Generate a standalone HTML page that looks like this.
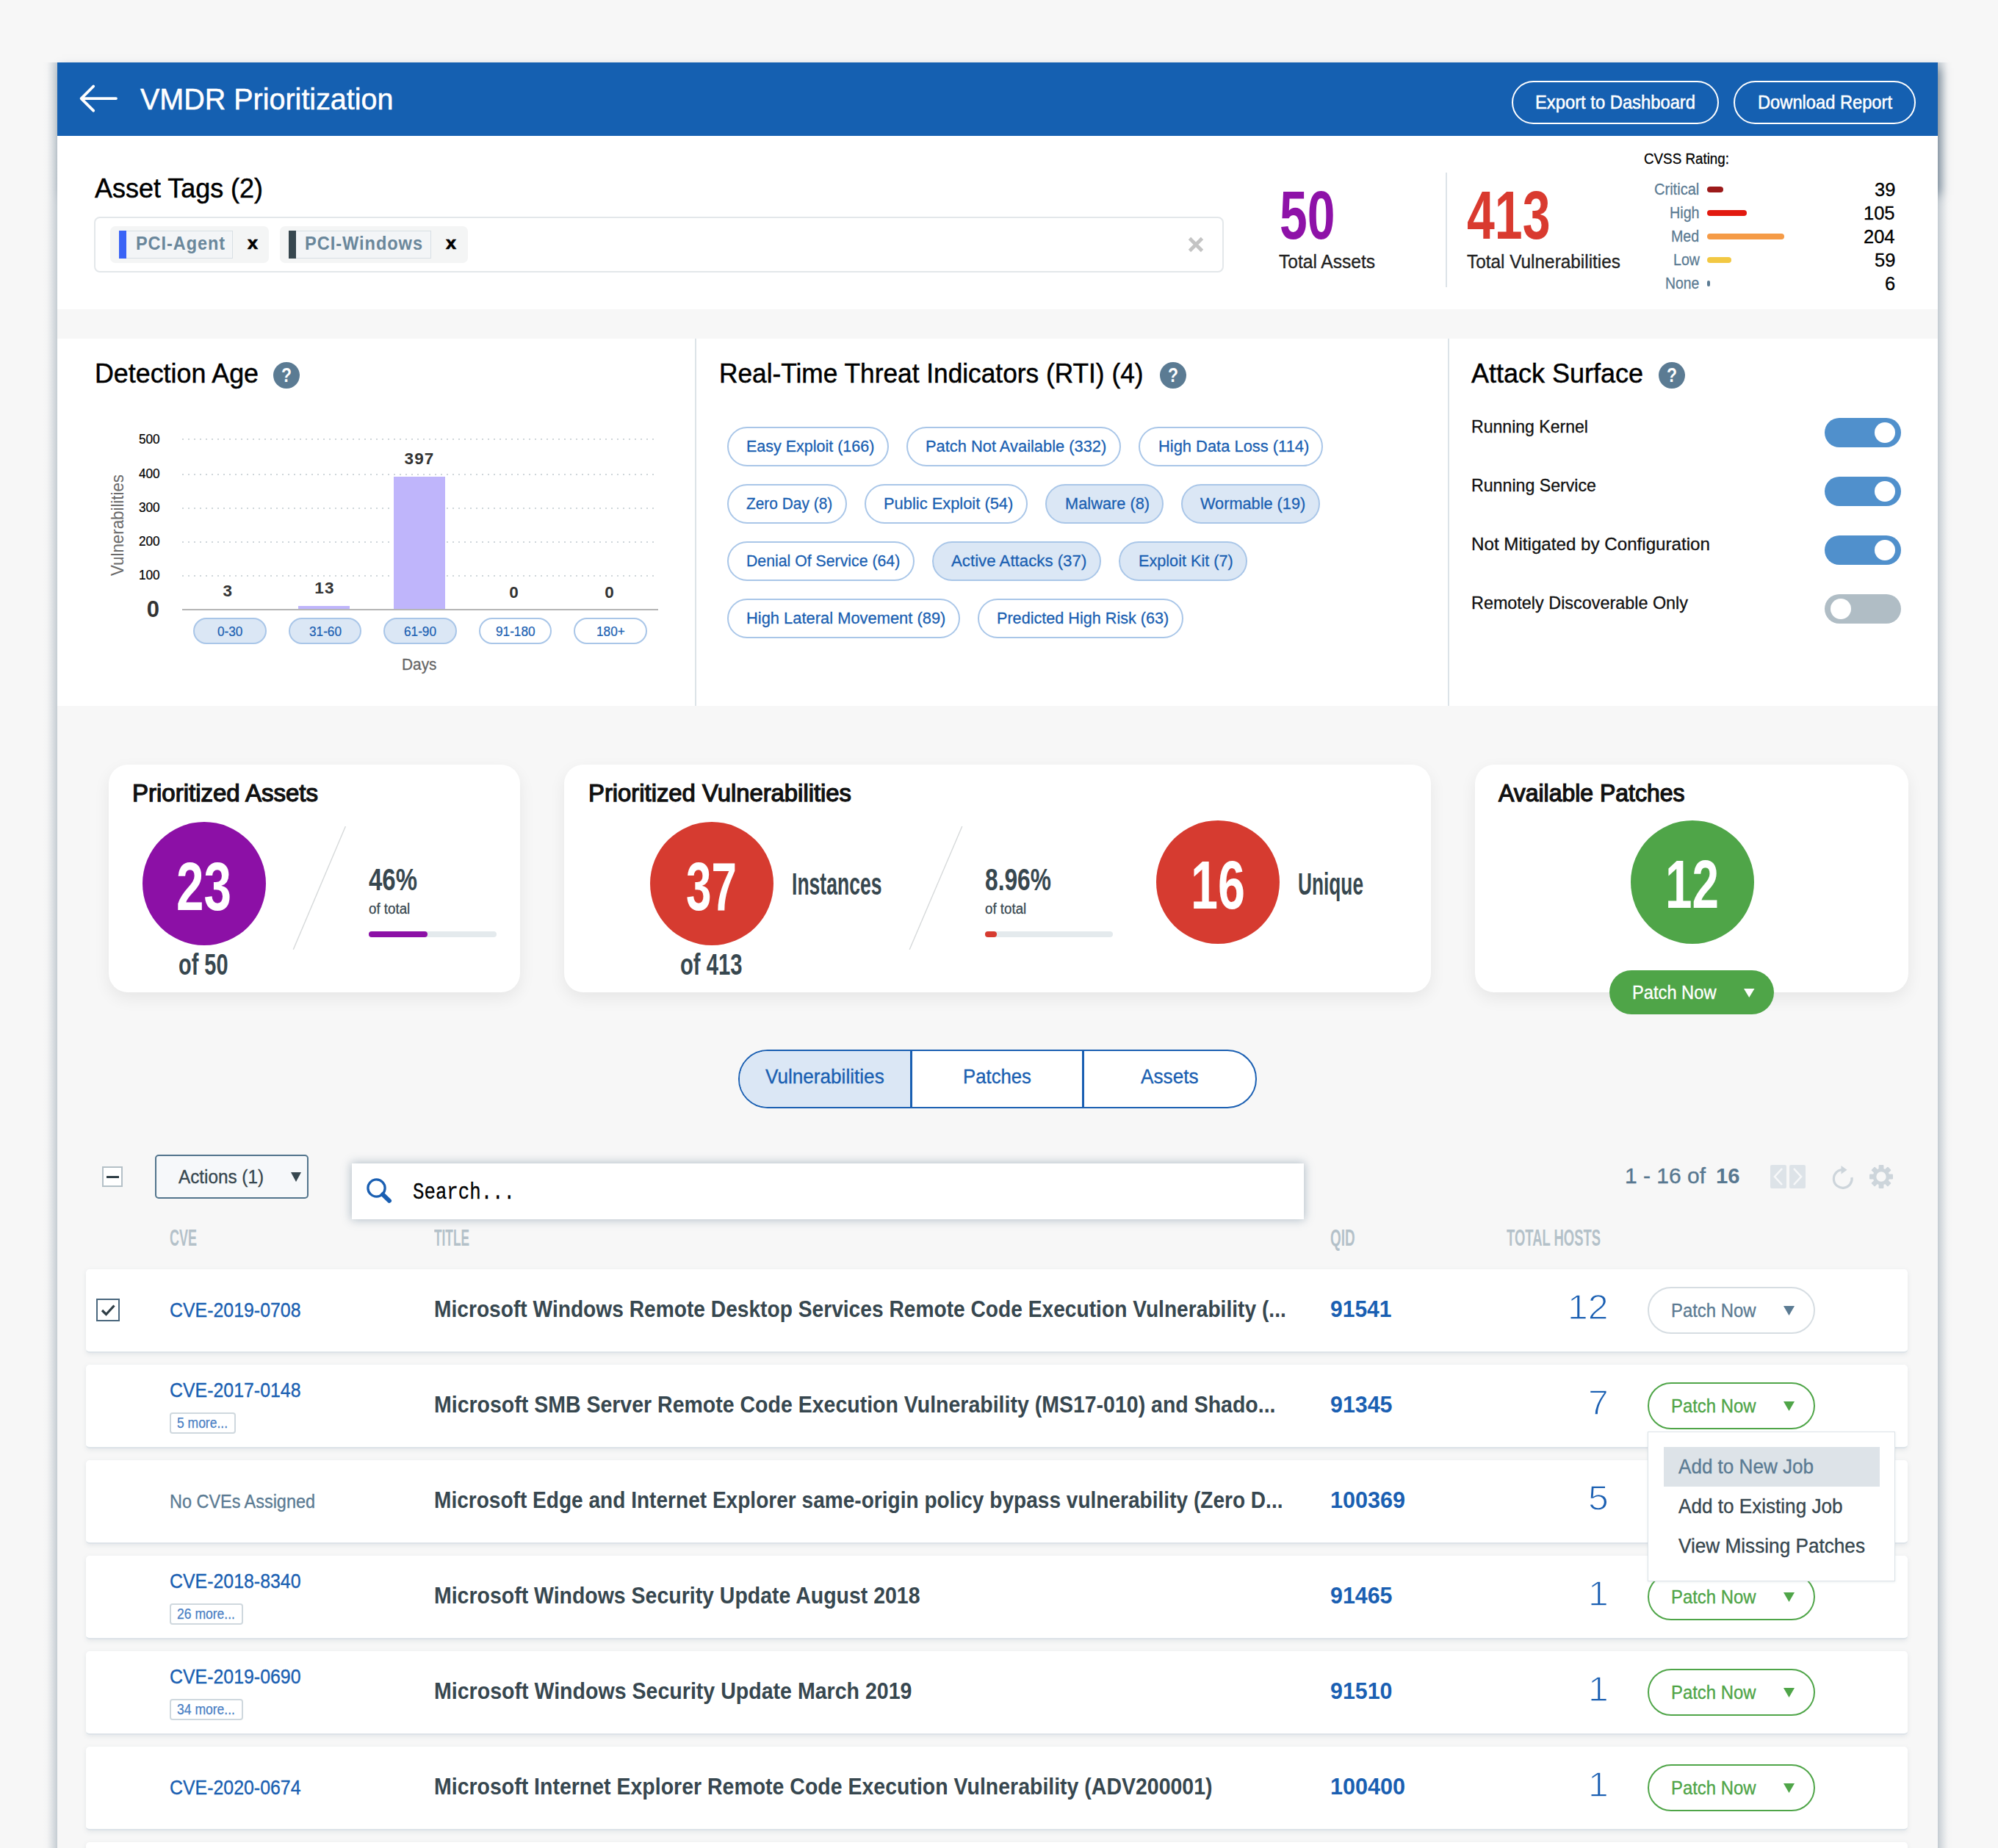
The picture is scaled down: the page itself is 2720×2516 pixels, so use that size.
<!DOCTYPE html>
<html lang="en"><head><meta charset="utf-8"><title>VMDR Prioritization</title>
<style>
*{box-sizing:border-box;margin:0;padding:0}
html,body{background:#f7f7f7}
body{font-family:"Liberation Sans", sans-serif}
#root{position:relative;width:2720px;height:2516px;overflow:hidden;background:#f7f7f7}
@media (min-resolution:2dppx) and (max-width:1400px){html{zoom:.5}}
.b{position:absolute}
.t{position:absolute;white-space:pre;line-height:1;transform-origin:0 50%;display:block;font-family:"Liberation Sans", sans-serif;font-weight:400}
.m{font-family:"Liberation Mono", monospace}
svg{position:absolute;overflow:visible}
</style></head>
<body>
<div id="root">
<div class="b" style="left:58px;top:85px;width:20px;height:2440px;background:linear-gradient(to right,rgba(140,156,169,0) 0%,rgba(140,156,169,.03) 30%,rgba(140,156,169,.11) 45%,rgba(140,156,169,.23) 65%,rgba(140,156,169,.33) 80%,rgba(140,156,169,.47) 100%)"></div>
<div class="b" style="left:2638px;top:85px;width:20px;height:2440px;background:linear-gradient(to left,rgba(140,156,169,0) 0%,rgba(140,156,169,.03) 30%,rgba(140,156,169,.11) 45%,rgba(140,156,169,.23) 65%,rgba(140,156,169,.33) 80%,rgba(140,156,169,.47) 100%)"></div>
<div class="b" style="left:80px;top:90px;width:2556px;height:172px;box-shadow:5px 3px 13px rgba(60,85,108,.6);"></div>
<div class="b" style="left:78px;top:85px;width:2560px;height:2440px;background:#f7f7f7;"></div>
<div class="b" style="left:78px;top:85px;width:2560px;height:100px;background:#1560b1;"></div>
<svg style="left:100px;top:105px" width="70" height="60" viewBox="100 105 70 60"><path d="M158 134.1H110.6M127.2 117.5L110.6 134.1L127.2 150.7" fill="none" stroke="#fff" stroke-width="3.8" stroke-linecap="round" stroke-linejoin="round"/></svg>
<span class="t" style="font-size:40px;color:#fff;-webkit-text-stroke:0.52px;left:190.50px;top:115.43px;transform:scaleX(0.9872);">VMDR Prioritization</span>
<div class="b" style="left:2058px;top:110px;width:281.5px;height:58.5px;border-radius:30px;border:2.5px solid #fff;"></div>
<span class="t" style="font-size:25px;color:#fff;left:2090.00px;top:127.13px;transform:scaleX(0.9507);-webkit-text-stroke:.5px #fff;">Export to Dashboard</span>
<div class="b" style="left:2360px;top:110px;width:248px;height:58.5px;border-radius:30px;border:2.5px solid #fff;"></div>
<span class="t" style="font-size:25px;color:#fff;left:2392.50px;top:127.13px;transform:scaleX(0.9473);-webkit-text-stroke:.5px #fff;">Download Report</span>
<div class="b" style="left:78px;top:185px;width:2560px;height:235.5px;background:#fff;"></div>
<span class="t" style="font-size:36.6px;color:#000;-webkit-text-stroke:0.48px;left:128.50px;top:238.61px;transform:scaleX(0.9823);">Asset Tags (2)</span>
<div class="b" style="left:128px;top:295px;width:1537.5px;height:76px;background:#fff;border-radius:8px;border:2px solid #e3e7ea;"></div>
<div class="b" style="left:150px;top:308px;width:216px;height:49.5px;background:#f4f5f5;border-radius:7px;"></div>
<div class="b" style="left:162px;top:314px;width:10px;height:37.5px;background:#3a63f6;"></div>
<div class="b" style="left:172px;top:314px;width:144.5px;height:37.5px;background:#f3f5f7;border:1.5px solid #d8dfe4;border-left:none;"></div>
<span class="t" style="font-size:25px;color:#6a879b;font-weight:700;letter-spacing:1px;left:185.00px;top:318.83px;transform:scaleX(0.9397);">PCI-Agent</span>
<span class="t" style="font-size:24.5px;color:#000;font-weight:700;left:336.60px;top:318.86px;transform:scaleX(1.0263);-webkit-text-stroke:.7px #000;">x</span>
<div class="b" style="left:381px;top:308px;width:256px;height:49.5px;background:#f4f5f5;border-radius:7px;"></div>
<div class="b" style="left:392.5px;top:314px;width:10px;height:37.5px;background:#37474f;"></div>
<div class="b" style="left:402.5px;top:314px;width:184px;height:37.5px;background:#f3f5f7;border:1.5px solid #d8dfe4;border-left:none;"></div>
<span class="t" style="font-size:25px;color:#6a879b;font-weight:700;letter-spacing:1px;left:415.00px;top:318.83px;transform:scaleX(0.9443);">PCI-Windows</span>
<span class="t" style="font-size:24.5px;color:#000;font-weight:700;left:606.60px;top:318.86px;transform:scaleX(1.0263);-webkit-text-stroke:.7px #000;">x</span>
<svg style="left:1618px;top:323px" width="20" height="20" viewBox="0 0 20 20"><path d="M1.5 1.5L18.5 18.5M18.5 1.5L1.5 18.5" stroke="#c4c4c4" stroke-width="4.8" fill="none"/></svg>
<span class="t" style="font-size:92px;color:#8e12a8;font-weight:700;left:1741.50px;top:246.70px;transform:scaleX(0.7377);">50</span>
<span class="t" style="font-size:26.5px;color:#222;-webkit-text-stroke:0.34px;left:1741.00px;top:342.96px;transform:scaleX(0.9264);">Total Assets</span>
<div class="b" style="left:1968px;top:235px;width:2px;height:156px;background:#dde3e8;"></div>
<span class="t" style="font-size:92px;color:#d93a2f;font-weight:700;left:1997.00px;top:246.70px;transform:scaleX(0.7394);">413</span>
<span class="t" style="font-size:26.5px;color:#222;-webkit-text-stroke:0.34px;left:1996.50px;top:342.96px;transform:scaleX(0.9193);">Total Vulnerabilities</span>
<span class="t" style="font-size:21px;color:#000;-webkit-text-stroke:0.27px;left:2238.00px;top:205.22px;transform:scaleX(0.8953);">CVSS Rating:</span>
<span class="t" style="font-size:22.5px;color:#5b7b93;-webkit-text-stroke:0.29px;left:2252.20px;top:247.05px;transform:scaleX(0.8914);">Critical</span>
<div class="b" style="left:2324px;top:253.5px;width:22px;height:8.5px;background:#9c1a1a;border-radius:4.5px;"></div>
<span class="t" style="font-size:26px;color:#000;-webkit-text-stroke:0.34px;left:2551.66px;top:245.29px;transform:scaleX(0.9800);">39</span>
<span class="t" style="font-size:22.5px;color:#5b7b93;-webkit-text-stroke:0.29px;left:2272.90px;top:279.05px;transform:scaleX(0.8772);">High</span>
<div class="b" style="left:2324px;top:285.5px;width:54px;height:8.5px;background:#e2190f;border-radius:4.5px;"></div>
<span class="t" style="font-size:26px;color:#000;-webkit-text-stroke:0.34px;left:2537.48px;top:277.29px;transform:scaleX(0.9800);">105</span>
<span class="t" style="font-size:22.5px;color:#5b7b93;-webkit-text-stroke:0.29px;left:2275.30px;top:311.05px;transform:scaleX(0.8725);">Med</span>
<div class="b" style="left:2324px;top:317.5px;width:105px;height:8.5px;background:#f59b47;border-radius:4.5px;"></div>
<span class="t" style="font-size:26px;color:#000;-webkit-text-stroke:0.34px;left:2537.48px;top:309.29px;transform:scaleX(0.9800);">204</span>
<span class="t" style="font-size:22.5px;color:#5b7b93;-webkit-text-stroke:0.29px;left:2277.50px;top:343.05px;transform:scaleX(0.8721);">Low</span>
<div class="b" style="left:2324px;top:349.5px;width:33px;height:8.5px;background:#f2c843;border-radius:4.5px;"></div>
<span class="t" style="font-size:26px;color:#000;-webkit-text-stroke:0.34px;left:2551.66px;top:341.29px;transform:scaleX(0.9800);">59</span>
<span class="t" style="font-size:22.5px;color:#5b7b93;-webkit-text-stroke:0.29px;left:2267.20px;top:375.05px;transform:scaleX(0.8606);">None</span>
<div class="b" style="left:2324px;top:381.5px;width:4px;height:8.5px;background:#5b7b93;border-radius:4.5px;"></div>
<span class="t" style="font-size:26px;color:#000;-webkit-text-stroke:0.34px;left:2565.82px;top:373.29px;transform:scaleX(0.9800);">6</span>
<div class="b" style="left:78px;top:460.5px;width:2560px;height:500px;background:#fff;"></div>
<div class="b" style="left:945.5px;top:460.5px;width:2px;height:500px;background:#dce3e8;"></div>
<div class="b" style="left:1971.2px;top:460.5px;width:2px;height:500px;background:#dce3e8;"></div>
<span class="t" style="font-size:36.6px;color:#000;-webkit-text-stroke:0.48px;left:128.50px;top:490.61px;transform:scaleX(0.9791);">Detection Age</span>
<div class="b" style="left:372.1px;top:493.3px;width:35.8px;height:35.8px;border-radius:50%;background:#5b7b93"></div>
<span class="t" style="font-size:28px;color:#fff;font-weight:700;left:383.29px;top:497.49px;transform:scaleX(0.8200);">?</span>
<span class="t" style="font-size:24.5px;color:#6a6a6a;left:147.96px;top:783.70px;transform-origin:0 0;transform:rotate(-90deg) scaleX(0.9101);">Vulnerabilities</span>
<span class="t" style="font-size:18px;color:#000;-webkit-text-stroke:0.23px;left:188.70px;top:589.46px;transform:scaleX(0.9552);">500</span>
<div class="b" style="left:248px;top:597px;width:643px;height:2px;background:repeating-linear-gradient(to right,#cfd6da 0 2px,transparent 2px 8px)"></div>
<span class="t" style="font-size:18px;color:#000;-webkit-text-stroke:0.23px;left:188.70px;top:635.56px;transform:scaleX(0.9552);">400</span>
<div class="b" style="left:248px;top:644.6px;width:643px;height:2px;background:repeating-linear-gradient(to right,#cfd6da 0 2px,transparent 2px 8px)"></div>
<span class="t" style="font-size:18px;color:#000;-webkit-text-stroke:0.23px;left:188.70px;top:681.66px;transform:scaleX(0.9552);">300</span>
<div class="b" style="left:248px;top:690.7px;width:643px;height:2px;background:repeating-linear-gradient(to right,#cfd6da 0 2px,transparent 2px 8px)"></div>
<span class="t" style="font-size:18px;color:#000;-webkit-text-stroke:0.23px;left:188.70px;top:727.76px;transform:scaleX(0.9552);">200</span>
<div class="b" style="left:248px;top:736.8px;width:643px;height:2px;background:repeating-linear-gradient(to right,#cfd6da 0 2px,transparent 2px 8px)"></div>
<span class="t" style="font-size:18px;color:#000;-webkit-text-stroke:0.23px;left:188.70px;top:773.86px;transform:scaleX(0.9552);">100</span>
<div class="b" style="left:248px;top:782.9px;width:643px;height:2px;background:repeating-linear-gradient(to right,#cfd6da 0 2px,transparent 2px 8px)"></div>
<span class="t" style="font-size:31px;color:#333;font-weight:700;left:199.75px;top:814.25px;">0</span>
<div class="b" style="left:248px;top:828.5px;width:648px;height:2px;background:#b5b5b5;"></div>
<div class="b" style="left:536px;top:649.2px;width:70px;height:179.5px;background:#bfb5fb;"></div>
<div class="b" style="left:406.2px;top:825px;width:69.8px;height:3.7px;background:#bfb5fb;"></div>
<span class="t" style="font-size:22.5px;color:#333;font-weight:700;letter-spacing:1.2px;left:303.44px;top:793.95px;">3</span>
<span class="t" style="font-size:22.5px;color:#333;font-weight:700;letter-spacing:1.2px;left:428.28px;top:789.95px;">13</span>
<span class="t" style="font-size:22.5px;color:#333;font-weight:700;letter-spacing:1.2px;left:550.43px;top:613.95px;">397</span>
<span class="t" style="font-size:22.5px;color:#333;font-weight:700;letter-spacing:1.2px;left:693.14px;top:795.95px;">0</span>
<span class="t" style="font-size:22.5px;color:#333;font-weight:700;letter-spacing:1.2px;left:823.14px;top:795.95px;">0</span>
<div class="b" style="left:263.2px;top:841px;width:99.8px;height:35.6px;background:#dbe7f5;border-radius:18px;border:2px solid #a9c6e8;"></div>
<span class="t" style="font-size:18.5px;color:#1a5fb2;-webkit-text-stroke:0.24px;left:295.88px;top:851.14px;transform:scaleX(0.9300);">0-30</span>
<div class="b" style="left:392.65px;top:841px;width:99.8px;height:35.6px;background:#dbe7f5;border-radius:18px;border:2px solid #a9c6e8;"></div>
<span class="t" style="font-size:18.5px;color:#1a5fb2;-webkit-text-stroke:0.24px;left:420.54px;top:851.14px;transform:scaleX(0.9300);">31-60</span>
<div class="b" style="left:522.1px;top:841px;width:99.8px;height:35.6px;background:#dbe7f5;border-radius:18px;border:2px solid #a9c6e8;"></div>
<span class="t" style="font-size:18.5px;color:#1a5fb2;-webkit-text-stroke:0.24px;left:549.99px;top:851.14px;transform:scaleX(0.9300);">61-90</span>
<div class="b" style="left:651.55px;top:841px;width:99.8px;height:35.6px;background:#fff;border-radius:18px;border:2px solid #a9c6e8;"></div>
<span class="t" style="font-size:18.5px;color:#1a5fb2;-webkit-text-stroke:0.24px;left:674.66px;top:851.14px;transform:scaleX(0.9300);">91-180</span>
<div class="b" style="left:781px;top:841px;width:99.8px;height:35.6px;background:#fff;border-radius:18px;border:2px solid #a9c6e8;"></div>
<span class="t" style="font-size:18.5px;color:#1a5fb2;-webkit-text-stroke:0.24px;left:811.52px;top:851.14px;transform:scaleX(0.9300);">180+</span>
<span class="t" style="font-size:21.8px;color:#666;-webkit-text-stroke:0.28px;left:547.25px;top:894.14px;transform:scaleX(0.9563);">Days</span>
<span class="t" style="font-size:36.6px;color:#000;-webkit-text-stroke:0.48px;left:979.00px;top:490.61px;transform:scaleX(0.9642);">Real-Time Threat Indicators (RTI) (4)</span>
<div class="b" style="left:1578.8px;top:493.3px;width:35.8px;height:35.8px;border-radius:50%;background:#5b7b93"></div>
<span class="t" style="font-size:28px;color:#fff;font-weight:700;left:1589.99px;top:497.49px;transform:scaleX(0.8200);">?</span>
<div class="b" style="left:989.5px;top:581.3px;width:220.3px;height:53.4px;background:#fff;border-radius:27px;border:2.5px solid #a9c6e8;"></div>
<span class="t" style="font-size:22.5px;color:#1a5fb2;-webkit-text-stroke:0.29px;left:1016.00px;top:596.95px;transform:scaleX(0.9546);">Easy Exploit (166)</span>
<div class="b" style="left:1233.8px;top:581.3px;width:292.3px;height:53.4px;background:#fff;border-radius:27px;border:2.5px solid #a9c6e8;"></div>
<span class="t" style="font-size:22.5px;color:#1a5fb2;-webkit-text-stroke:0.29px;left:1260.30px;top:596.95px;transform:scaleX(0.9716);">Patch Not Available (332)</span>
<div class="b" style="left:1550.1px;top:581.3px;width:251.3px;height:53.4px;background:#fff;border-radius:27px;border:2.5px solid #a9c6e8;"></div>
<span class="t" style="font-size:22.5px;color:#1a5fb2;-webkit-text-stroke:0.29px;left:1576.60px;top:596.95px;transform:scaleX(0.9733);">High Data Loss (114)</span>
<div class="b" style="left:989.5px;top:659.3px;width:163.2px;height:53.4px;background:#fff;border-radius:27px;border:2.5px solid #a9c6e8;"></div>
<span class="t" style="font-size:22.5px;color:#1a5fb2;-webkit-text-stroke:0.29px;left:1016.00px;top:674.95px;transform:scaleX(0.9281);">Zero Day (8)</span>
<div class="b" style="left:1176.7px;top:659.3px;width:222.3px;height:53.4px;background:#fff;border-radius:27px;border:2.5px solid #a9c6e8;"></div>
<span class="t" style="font-size:22.5px;color:#1a5fb2;-webkit-text-stroke:0.29px;left:1203.20px;top:674.95px;transform:scaleX(0.9722);">Public Exploit (54)</span>
<div class="b" style="left:1423px;top:659.3px;width:161.1px;height:53.4px;background:#dbe7f5;border-radius:27px;border:2.5px solid #a9c6e8;"></div>
<span class="t" style="font-size:22.5px;color:#1a5fb2;-webkit-text-stroke:0.29px;left:1449.50px;top:674.95px;transform:scaleX(0.9690);">Malware (8)</span>
<div class="b" style="left:1607.7px;top:659.3px;width:189.2px;height:53.4px;background:#dbe7f5;border-radius:27px;border:2.5px solid #a9c6e8;"></div>
<span class="t" style="font-size:22.5px;color:#1a5fb2;-webkit-text-stroke:0.29px;left:1634.20px;top:674.95px;transform:scaleX(0.9650);">Wormable (19)</span>
<div class="b" style="left:989.5px;top:737.3px;width:255.3px;height:53.4px;background:#fff;border-radius:27px;border:2.5px solid #a9c6e8;"></div>
<span class="t" style="font-size:22.5px;color:#1a5fb2;-webkit-text-stroke:0.29px;left:1016.00px;top:752.95px;transform:scaleX(0.9456);">Denial Of Service (64)</span>
<div class="b" style="left:1268.8px;top:737.3px;width:230.3px;height:53.4px;background:#dbe7f5;border-radius:27px;border:2.5px solid #a9c6e8;"></div>
<span class="t" style="font-size:22.5px;color:#1a5fb2;-webkit-text-stroke:0.29px;left:1295.30px;top:752.95px;transform:scaleX(0.9891);">Active Attacks (37)</span>
<div class="b" style="left:1523.1px;top:737.3px;width:174.7px;height:53.4px;background:#dbe7f5;border-radius:27px;border:2.5px solid #a9c6e8;"></div>
<span class="t" style="font-size:22.5px;color:#1a5fb2;-webkit-text-stroke:0.29px;left:1549.60px;top:752.95px;transform:scaleX(0.9619);">Exploit Kit (7)</span>
<div class="b" style="left:989.5px;top:815.3px;width:317.4px;height:53.4px;background:#fff;border-radius:27px;border:2.5px solid #a9c6e8;"></div>
<span class="t" style="font-size:22.5px;color:#1a5fb2;-webkit-text-stroke:0.29px;left:1016.00px;top:830.95px;transform:scaleX(0.9731);">High Lateral Movement (89)</span>
<div class="b" style="left:1330.9px;top:815.3px;width:280.3px;height:53.4px;background:#fff;border-radius:27px;border:2.5px solid #a9c6e8;"></div>
<span class="t" style="font-size:22.5px;color:#1a5fb2;-webkit-text-stroke:0.29px;left:1357.40px;top:830.95px;transform:scaleX(0.9609);">Predicted High Risk (63)</span>
<span class="t" style="font-size:36.6px;color:#000;-webkit-text-stroke:0.48px;left:2003.40px;top:490.61px;transform:scaleX(0.9837);">Attack Surface</span>
<div class="b" style="left:2258.1px;top:493.3px;width:35.8px;height:35.8px;border-radius:50%;background:#5b7b93"></div>
<span class="t" style="font-size:28px;color:#fff;font-weight:700;left:2269.29px;top:497.49px;transform:scaleX(0.8200);">?</span>
<span class="t" style="font-size:24.5px;color:#111;-webkit-text-stroke:0.32px;left:2003.00px;top:569.26px;transform:scaleX(0.9414);">Running Kernel</span>
<div class="b" style="left:2484px;top:569.3px;width:104px;height:40px;background:#5090cc;border-radius:20px;"></div>
<div class="b" style="left:2551.7px;top:575px;width:28px;height:28px;border-radius:50%;background:#fff"></div>
<span class="t" style="font-size:24.5px;color:#111;-webkit-text-stroke:0.32px;left:2003.00px;top:649.26px;transform:scaleX(0.9456);">Running Service</span>
<div class="b" style="left:2484px;top:649.3px;width:104px;height:40px;background:#5090cc;border-radius:20px;"></div>
<div class="b" style="left:2551.7px;top:655px;width:28px;height:28px;border-radius:50%;background:#fff"></div>
<span class="t" style="font-size:24.5px;color:#111;-webkit-text-stroke:0.32px;left:2003.00px;top:729.26px;transform:scaleX(0.9861);">Not Mitigated by Configuration</span>
<div class="b" style="left:2484px;top:729.3px;width:104px;height:40px;background:#5090cc;border-radius:20px;"></div>
<div class="b" style="left:2551.7px;top:735px;width:28px;height:28px;border-radius:50%;background:#fff"></div>
<span class="t" style="font-size:24.5px;color:#111;-webkit-text-stroke:0.32px;left:2003.00px;top:809.26px;transform:scaleX(0.9544);">Remotely Discoverable Only</span>
<div class="b" style="left:2484px;top:809.3px;width:104px;height:40px;background:#b0bdc5;border-radius:20px;"></div>
<div class="b" style="left:2491.8px;top:815px;width:28px;height:28px;border-radius:50%;background:#fff"></div>
<div class="b" style="left:148px;top:1041px;width:560px;height:309.5px;background:#fff;border-radius:26px;box-shadow:0 8px 22px rgba(0,0,0,.07);"></div>
<div class="b" style="left:768px;top:1041px;width:1179.5px;height:309.5px;background:#fff;border-radius:26px;box-shadow:0 8px 22px rgba(0,0,0,.07);"></div>
<div class="b" style="left:2008px;top:1041px;width:590px;height:309.5px;background:#fff;border-radius:26px;box-shadow:0 8px 22px rgba(0,0,0,.07);"></div>
<span class="t" style="font-size:32.4px;color:#111;left:180.00px;top:1063.57px;transform:scaleX(1.0184);-webkit-text-stroke:1.25px #111;">Prioritized Assets</span>
<div class="b" style="left:193.7px;top:1118.7px;width:168px;height:168px;border-radius:50%;background:#8c10a6"></div>
<span class="t" style="font-size:92px;color:#fff;font-weight:700;left:240.20px;top:1161.10px;transform:scaleX(0.7328);">23</span>
<span class="t" style="font-size:41px;color:#37474f;font-weight:700;left:243.25px;top:1293.09px;transform:scaleX(0.7053);">of 50</span>
<svg style="left:0;top:0" width="2720" height="2516"><line x1="470.4" y1="1125" x2="399.3" y2="1292.8" stroke="#d6d9da" stroke-width="1.4"/></svg>
<span class="t" style="font-size:43px;color:#37474f;font-weight:700;left:502.40px;top:1176.29px;transform:scaleX(0.7667);">46%</span>
<span class="t" style="font-size:19.6px;color:#37474f;-webkit-text-stroke:0.25px;left:502.40px;top:1227.70px;transform:scaleX(0.9570);">of total</span>
<div class="b" style="left:502.4px;top:1268px;width:173.5px;height:8px;background:#e4eaed;border-radius:4px;"></div>
<div class="b" style="left:502.4px;top:1268px;width:79.81px;height:8px;background:#8c10a6;border-radius:4px;"></div>
<span class="t" style="font-size:32.4px;color:#111;left:800.70px;top:1063.57px;transform:scaleX(1.0129);-webkit-text-stroke:1.25px #111;">Prioritized Vulnerabilities</span>
<div class="b" style="left:884.9px;top:1118.7px;width:168px;height:168px;border-radius:50%;background:#d63b30"></div>
<span class="t" style="font-size:92px;color:#fff;font-weight:700;left:934.40px;top:1161.10px;transform:scaleX(0.6742);">37</span>
<span class="t" style="font-size:41px;color:#37474f;font-weight:700;left:926.25px;top:1293.09px;transform:scaleX(0.7131);">of 413</span>
<span class="t" style="font-size:43px;color:#37474f;font-weight:700;left:1077.60px;top:1182.29px;transform:scaleX(0.6175);">Instances</span>
<svg style="left:0;top:0" width="2720" height="2516"><line x1="1309.8" y1="1125" x2="1238.2" y2="1292.8" stroke="#d6d9da" stroke-width="1.4"/></svg>
<span class="t" style="font-size:43px;color:#37474f;font-weight:700;left:1341.30px;top:1176.29px;transform:scaleX(0.7381);">8.96%</span>
<span class="t" style="font-size:19.6px;color:#37474f;-webkit-text-stroke:0.25px;left:1341.30px;top:1227.70px;transform:scaleX(0.9570);">of total</span>
<div class="b" style="left:1341.3px;top:1268px;width:173.5px;height:8px;background:#e4eaed;border-radius:4px;"></div>
<div class="b" style="left:1341.3px;top:1268px;width:15.5456px;height:8px;background:#d63b30;border-radius:4px;"></div>
<div class="b" style="left:1574.2px;top:1116.7px;width:168px;height:168px;border-radius:50%;background:#d63b30"></div>
<span class="t" style="font-size:92px;color:#fff;font-weight:700;left:1621.20px;top:1159.10px;transform:scaleX(0.7231);">16</span>
<span class="t" style="font-size:43px;color:#37474f;font-weight:700;left:1766.80px;top:1182.29px;transform:scaleX(0.6108);">Unique</span>
<span class="t" style="font-size:32.4px;color:#111;left:2040.40px;top:1063.57px;transform:scaleX(0.9867);-webkit-text-stroke:1.25px #111;">Available Patches</span>
<div class="b" style="left:2219.5px;top:1117px;width:168px;height:168px;border-radius:50%;background:#4fa548"></div>
<span class="t" style="font-size:92px;color:#fff;font-weight:700;left:2267.00px;top:1158.10px;transform:scaleX(0.7133);">12</span>
<div class="b" style="left:2191px;top:1321.4px;width:224px;height:59.5px;background:#4fa548;border-radius:30px;"></div>
<span class="t" style="font-size:25px;color:#fff;-webkit-text-stroke:0.33px;left:2221.80px;top:1338.83px;transform:scaleX(0.9471);">Patch Now</span>
<svg style="left:2374.2px;top:1346px" width="14.5" height="12" viewBox="0 0 14.5 12"><path d="M0 0H14.5L7.25 12Z" fill="#fff"/></svg>
<div class="b" style="left:1005.3px;top:1429.3px;width:705.4px;height:79.5px;background:#fff;border-radius:40px;border:2.2px solid #1a5fb2;overflow:hidden;"><div class="b" style="left:0;top:0;width:233px;height:100%;background:#dbe7f5"></div><div class="b" style="left:232.2px;top:0;width:2.2px;height:100%;background:#1a5fb2"></div><div class="b" style="left:466.1px;top:0;width:2.2px;height:100%;background:#1a5fb2"></div></div>
<span class="t" style="font-size:27.5px;color:#1a5fb2;-webkit-text-stroke:0.36px;left:1042.00px;top:1452.22px;transform:scaleX(0.9501);">Vulnerabilities</span>
<span class="t" style="font-size:27.5px;color:#1a5fb2;-webkit-text-stroke:0.36px;left:1310.80px;top:1452.22px;transform:scaleX(0.9358);">Patches</span>
<span class="t" style="font-size:27.5px;color:#1a5fb2;-webkit-text-stroke:0.36px;left:1553.00px;top:1452.22px;transform:scaleX(0.9524);">Assets</span>
<div class="b" style="left:139px;top:1588px;width:28px;height:28px;background:#fff;border:2px solid #b4c0c7;"></div>
<div class="b" style="left:145px;top:1600.5px;width:16.5px;height:3px;background:#2f3e46;"></div>
<div class="b" style="left:211px;top:1572px;width:209px;height:59.6px;background:#f6f8fa;border-radius:5px;border:2px solid #52748c;"></div>
<span class="t" style="font-size:25.5px;color:#37474f;-webkit-text-stroke:0.33px;left:243.00px;top:1589.91px;transform:scaleX(0.9518);">Actions (1)</span>
<svg style="left:396px;top:1596px" width="14" height="13" viewBox="0 0 14 13"><path d="M0 0H14L7 13Z" fill="#37474f"/></svg>
<div class="b" style="left:479px;top:1583.6px;width:1296.3px;height:76.5px;background:#fff;box-shadow:0 0 12px 1px rgba(95,122,145,.45);"></div>
<svg style="left:497px;top:1602px" width="36" height="38" viewBox="0 0 36 38"><circle cx="15.5" cy="15.5" r="11.6" fill="none" stroke="#1a5fb2" stroke-width="3.3"/><path d="M24 24.2L33 32.8" stroke="#1a5fb2" stroke-width="6" stroke-linecap="round"/></svg>
<span class="t m" style="font-size:30.5px;color:#000;left:562.00px;top:1608.63px;transform:scaleX(0.8438);-webkit-text-stroke:.3px #000;">Search...</span>
<span class="t" style="font-size:29px;color:#587890;-webkit-text-stroke:0.38px;left:2211.50px;top:1586.95px;transform:scaleX(1.0338);">1 - 16 of</span>
<span class="t" style="font-size:29px;color:#587890;font-weight:700;left:2335.50px;top:1586.95px;transform:scaleX(1.0073);">16</span>
<div class="b" style="left:2410px;top:1586px;width:22px;height:32px;background:#dde3e8;border-radius:2px;"></div>
<div class="b" style="left:2436px;top:1586px;width:22px;height:32px;background:#dde3e8;border-radius:2px;"></div>
<svg style="left:2410px;top:1586px" width="48" height="32" viewBox="0 0 48 32"><path d="M16 5L6 16L16 27M32 5L42 16L32 27" fill="none" stroke="#f7f8f9" stroke-width="2.6"/></svg>
<svg style="left:2492px;top:1585px" width="34" height="36" viewBox="0 0 34 36"><path d="M15 7.6A12.4 12.4 0 1 0 29 18" fill="none" stroke="#cdd5db" stroke-width="3.2"/><path d="M14.5 2L22.5 7.8L14.5 13.6Z" fill="#cdd5db"/></svg>
<svg style="left:2544px;top:1585px" width="34" height="34" viewBox="-17 -17 34 34"><g fill="#cdd5db"><rect x="-3.4" y="-16" width="6.8" height="7" rx="1" transform="rotate(0)"/><rect x="-3.4" y="-16" width="6.8" height="7" rx="1" transform="rotate(45)"/><rect x="-3.4" y="-16" width="6.8" height="7" rx="1" transform="rotate(90)"/><rect x="-3.4" y="-16" width="6.8" height="7" rx="1" transform="rotate(135)"/><rect x="-3.4" y="-16" width="6.8" height="7" rx="1" transform="rotate(180)"/><rect x="-3.4" y="-16" width="6.8" height="7" rx="1" transform="rotate(225)"/><rect x="-3.4" y="-16" width="6.8" height="7" rx="1" transform="rotate(270)"/><rect x="-3.4" y="-16" width="6.8" height="7" rx="1" transform="rotate(315)"/></g><circle r="9" fill="none" stroke="#cdd5db" stroke-width="4.6"/></svg>
<span class="t" style="font-size:32px;color:#b4c1c9;font-weight:700;left:231.20px;top:1668.91px;transform:scaleX(0.5623);">CVE</span>
<span class="t" style="font-size:32px;color:#b4c1c9;font-weight:700;left:591.00px;top:1668.91px;transform:scaleX(0.5401);">TITLE</span>
<span class="t" style="font-size:32px;color:#b4c1c9;font-weight:700;left:1811.30px;top:1668.91px;transform:scaleX(0.5888);">QID</span>
<span class="t" style="font-size:32px;color:#b4c1c9;font-weight:700;left:2050.60px;top:1668.91px;transform:scaleX(0.5760);">TOTAL HOSTS</span>
<div class="b" style="left:117px;top:1728px;width:2480px;height:114px;background:#fff;border-radius:5px;border-bottom:2.6px solid #dde3e8;box-shadow:0 2px 6px rgba(100,120,140,.13);"></div>
<span class="t" style="font-size:27.5px;color:#1a5fb2;-webkit-text-stroke:0.36px;left:231.20px;top:1770.22px;transform:scaleX(0.9051);">CVE-2019-0708</span>
<span class="t" style="font-size:30.5px;color:#37474f;font-weight:700;left:591.00px;top:1767.28px;transform:scaleX(0.9233);">Microsoft Windows Remote Desktop Services Remote Code Execution Vulnerability (...</span>
<span class="t" style="font-size:30.5px;color:#1a5fb2;font-weight:700;left:1811.30px;top:1767.28px;transform:scaleX(0.9843);">91541</span>
<span class="t" style="font-size:49px;color:#1a5fb2;left:2134.39px;top:1754.51px;transform:scaleX(1.0200);-webkit-text-stroke:1.3px #fff;">12</span>
<div class="b" style="left:2243.3px;top:1752.3px;width:227.4px;height:63.4px;background:#fff;border-radius:32px;border:2.3px solid #d6dde2;"></div>
<span class="t" style="font-size:25.5px;color:#5b7b93;-webkit-text-stroke:0.33px;left:2275.00px;top:1772.41px;transform:scaleX(0.9366);">Patch Now</span>
<svg style="left:2427.5px;top:1778px" width="15" height="13" viewBox="0 0 15 13"><path d="M0 0H15L7.5 13Z" fill="#5b7b93"/></svg>
<div class="b" style="left:117px;top:1858px;width:2480px;height:114px;background:#fff;border-radius:5px;border-bottom:2.6px solid #dde3e8;box-shadow:0 2px 6px rgba(100,120,140,.13);"></div>
<span class="t" style="font-size:27.5px;color:#1a5fb2;-webkit-text-stroke:0.36px;left:231.20px;top:1879.42px;transform:scaleX(0.9051);">CVE-2017-0148</span>
<div class="b" style="left:231.2px;top:1923.4px;width:90px;height:28.6px;background:#fff;border-radius:4px;border:2px solid #cfd8de;"></div>
<span class="t" style="font-size:19.5px;color:#4a80c4;-webkit-text-stroke:0.25px;left:241.20px;top:1928.49px;transform:scaleX(0.8966);">5 more...</span>
<span class="t" style="font-size:30.5px;color:#37474f;font-weight:700;left:591.00px;top:1897.28px;transform:scaleX(0.9344);">Microsoft SMB Server Remote Code Execution Vulnerability (MS17-010) and Shado...</span>
<span class="t" style="font-size:30.5px;color:#1a5fb2;font-weight:700;left:1811.30px;top:1897.28px;transform:scaleX(0.9961);">91345</span>
<span class="t" style="font-size:49px;color:#1a5fb2;left:2162.19px;top:1884.51px;transform:scaleX(1.0200);-webkit-text-stroke:1.3px #fff;">7</span>
<div class="b" style="left:2243.3px;top:1882.3px;width:227.4px;height:63.4px;background:#fff;border-radius:32px;border:2.3px solid #4fa548;"></div>
<span class="t" style="font-size:25.5px;color:#4fa548;-webkit-text-stroke:0.33px;left:2275.00px;top:1902.41px;transform:scaleX(0.9366);">Patch Now</span>
<svg style="left:2427.5px;top:1908px" width="15" height="13" viewBox="0 0 15 13"><path d="M0 0H15L7.5 13Z" fill="#4fa548"/></svg>
<div class="b" style="left:117px;top:1988px;width:2480px;height:114px;background:#fff;border-radius:5px;border-bottom:2.6px solid #dde3e8;box-shadow:0 2px 6px rgba(100,120,140,.13);"></div>
<span class="t" style="font-size:25.5px;color:#5b7b93;-webkit-text-stroke:0.33px;left:231.20px;top:2031.91px;transform:scaleX(0.9190);">No CVEs Assigned</span>
<span class="t" style="font-size:30.5px;color:#37474f;font-weight:700;left:591.00px;top:2027.28px;transform:scaleX(0.9201);">Microsoft Edge and Internet Explorer same-origin policy bypass vulnerability (Zero D...</span>
<span class="t" style="font-size:30.5px;color:#1a5fb2;font-weight:700;left:1811.30px;top:2027.28px;transform:scaleX(1.0021);">100369</span>
<span class="t" style="font-size:49px;color:#1a5fb2;left:2162.19px;top:2014.51px;transform:scaleX(1.0200);-webkit-text-stroke:1.3px #fff;">5</span>
<div class="b" style="left:117px;top:2118px;width:2480px;height:114px;background:#fff;border-radius:5px;border-bottom:2.6px solid #dde3e8;box-shadow:0 2px 6px rgba(100,120,140,.13);"></div>
<span class="t" style="font-size:27.5px;color:#1a5fb2;-webkit-text-stroke:0.36px;left:231.20px;top:2139.42px;transform:scaleX(0.9051);">CVE-2018-8340</span>
<div class="b" style="left:231.2px;top:2183.4px;width:100px;height:28.6px;background:#fff;border-radius:4px;border:2px solid #cfd8de;"></div>
<span class="t" style="font-size:19.5px;color:#4a80c4;-webkit-text-stroke:0.25px;left:241.20px;top:2188.49px;transform:scaleX(0.8998);">26 more...</span>
<span class="t" style="font-size:30.5px;color:#37474f;font-weight:700;left:591.00px;top:2157.28px;transform:scaleX(0.9334);">Microsoft Windows Security Update August 2018</span>
<span class="t" style="font-size:30.5px;color:#1a5fb2;font-weight:700;left:1811.30px;top:2157.28px;transform:scaleX(0.9961);">91465</span>
<span class="t" style="font-size:49px;color:#1a5fb2;left:2162.19px;top:2144.51px;transform:scaleX(1.0200);-webkit-text-stroke:1.3px #fff;">1</span>
<div class="b" style="left:2243.3px;top:2142.3px;width:227.4px;height:63.4px;background:#fff;border-radius:32px;border:2.3px solid #4fa548;"></div>
<span class="t" style="font-size:25.5px;color:#4fa548;-webkit-text-stroke:0.33px;left:2275.00px;top:2162.41px;transform:scaleX(0.9366);">Patch Now</span>
<svg style="left:2427.5px;top:2168px" width="15" height="13" viewBox="0 0 15 13"><path d="M0 0H15L7.5 13Z" fill="#4fa548"/></svg>
<div class="b" style="left:117px;top:2248px;width:2480px;height:114px;background:#fff;border-radius:5px;border-bottom:2.6px solid #dde3e8;box-shadow:0 2px 6px rgba(100,120,140,.13);"></div>
<span class="t" style="font-size:27.5px;color:#1a5fb2;-webkit-text-stroke:0.36px;left:231.20px;top:2269.42px;transform:scaleX(0.9051);">CVE-2019-0690</span>
<div class="b" style="left:231.2px;top:2313.4px;width:100px;height:28.6px;background:#fff;border-radius:4px;border:2px solid #cfd8de;"></div>
<span class="t" style="font-size:19.5px;color:#4a80c4;-webkit-text-stroke:0.25px;left:241.20px;top:2318.49px;transform:scaleX(0.8998);">34 more...</span>
<span class="t" style="font-size:30.5px;color:#37474f;font-weight:700;left:591.00px;top:2287.28px;transform:scaleX(0.9365);">Microsoft Windows Security Update March 2019</span>
<span class="t" style="font-size:30.5px;color:#1a5fb2;font-weight:700;left:1811.30px;top:2287.28px;transform:scaleX(0.9961);">91510</span>
<span class="t" style="font-size:49px;color:#1a5fb2;left:2162.19px;top:2274.51px;transform:scaleX(1.0200);-webkit-text-stroke:1.3px #fff;">1</span>
<div class="b" style="left:2243.3px;top:2272.3px;width:227.4px;height:63.4px;background:#fff;border-radius:32px;border:2.3px solid #4fa548;"></div>
<span class="t" style="font-size:25.5px;color:#4fa548;-webkit-text-stroke:0.33px;left:2275.00px;top:2292.41px;transform:scaleX(0.9366);">Patch Now</span>
<svg style="left:2427.5px;top:2298px" width="15" height="13" viewBox="0 0 15 13"><path d="M0 0H15L7.5 13Z" fill="#4fa548"/></svg>
<div class="b" style="left:117px;top:2378px;width:2480px;height:114px;background:#fff;border-radius:5px;border-bottom:2.6px solid #dde3e8;box-shadow:0 2px 6px rgba(100,120,140,.13);"></div>
<span class="t" style="font-size:27.5px;color:#1a5fb2;-webkit-text-stroke:0.36px;left:231.20px;top:2420.22px;transform:scaleX(0.9051);">CVE-2020-0674</span>
<span class="t" style="font-size:30.5px;color:#37474f;font-weight:700;left:591.00px;top:2417.28px;transform:scaleX(0.9340);">Microsoft Internet Explorer Remote Code Execution Vulnerability (ADV200001)</span>
<span class="t" style="font-size:30.5px;color:#1a5fb2;font-weight:700;left:1811.30px;top:2417.28px;transform:scaleX(1.0021);">100400</span>
<span class="t" style="font-size:49px;color:#1a5fb2;left:2162.19px;top:2404.51px;transform:scaleX(1.0200);-webkit-text-stroke:1.3px #fff;">1</span>
<div class="b" style="left:2243.3px;top:2402.3px;width:227.4px;height:63.4px;background:#fff;border-radius:32px;border:2.3px solid #4fa548;"></div>
<span class="t" style="font-size:25.5px;color:#4fa548;-webkit-text-stroke:0.33px;left:2275.00px;top:2422.41px;transform:scaleX(0.9366);">Patch Now</span>
<svg style="left:2427.5px;top:2428px" width="15" height="13" viewBox="0 0 15 13"><path d="M0 0H15L7.5 13Z" fill="#4fa548"/></svg>
<div class="b" style="left:117px;top:2508px;width:2480px;height:114px;background:#fff;border-radius:5px;border-bottom:2.6px solid #dde3e8;box-shadow:0 2px 6px rgba(100,120,140,.13);"></div>
<div class="b" style="left:131px;top:1768.3px;width:31.5px;height:31px;background:#fff;border:2px solid #4a677d;"></div>
<svg style="left:131px;top:1768px" width="32" height="31" viewBox="0 0 32 31"><path d="M8 16L13.5 21.5L24.5 9.5" fill="none" stroke="#2f3e46" stroke-width="3.2"/></svg>
<div class="b" style="left:2243.2px;top:1948.6px;width:337.3px;height:204.6px;background:#fff;border:1.5px solid #dce3e8;box-shadow:0 1px 3px rgba(120,140,155,.15);"></div>
<div class="b" style="left:2265.3px;top:1970.3px;width:293.5px;height:53.5px;background:#dde3e8;"></div>
<span class="t" style="font-size:27.5px;color:#5b7b93;-webkit-text-stroke:0.36px;left:2284.50px;top:1982.72px;transform:scaleX(0.9478);">Add to New Job</span>
<span class="t" style="font-size:27.5px;color:#37474f;-webkit-text-stroke:0.36px;left:2284.50px;top:2037.22px;transform:scaleX(0.9494);">Add to Existing Job</span>
<span class="t" style="font-size:27.5px;color:#37474f;-webkit-text-stroke:0.36px;left:2284.50px;top:2091.22px;transform:scaleX(0.9514);">View Missing Patches</span>
</div>
</body></html>
